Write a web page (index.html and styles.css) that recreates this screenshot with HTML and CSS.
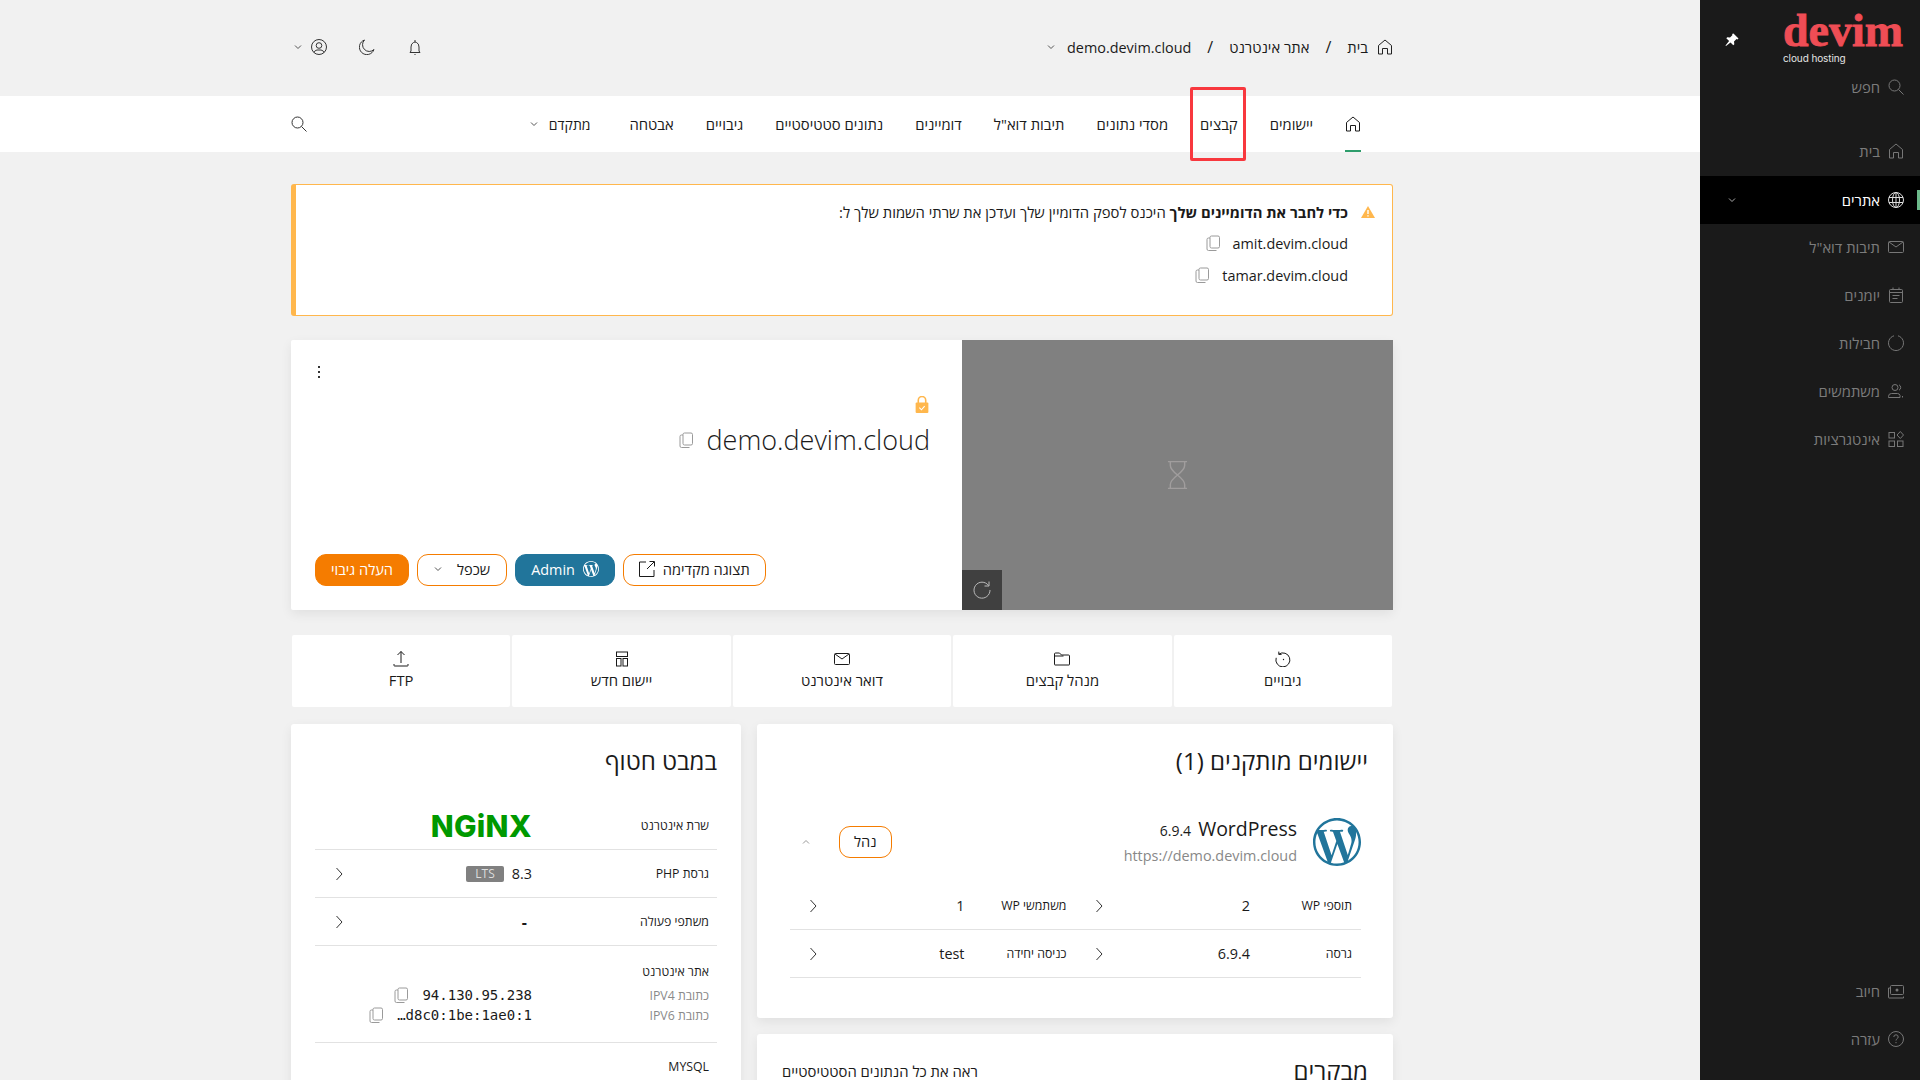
FILE: index.html
```html
<!DOCTYPE html>
<html lang="he" dir="rtl">
<head>
    <meta charset="utf-8">
    <title>demo.devim.cloud</title>
    <link rel="stylesheet" href="styles.css">
</head>
<body>
    <svg class="sprite" xmlns="http://www.w3.org/2000/svg">
        <symbol id="i-home" viewBox="0 0 16 16"><path d="M1.5 15V6.5L8 1l6.500 5.500V15h-4V9.500h-5V15z"/></symbol>
        <symbol id="i-copy" viewBox="0 0 16 16"><rect x="5" y="1" width="9.500" height="12" rx="1.500"/><path d="M5 3H3.500Q2 3 2 4.500V14q0 1.500 1.500 1.500h8"/></symbol>
        <symbol id="i-down" viewBox="0 0 8 8"><path d="M1 2.500l3 3 3-3"/></symbol>
        <symbol id="i-left" viewBox="0 0 8 14"><path d="M1.500 1l5.500 6-5.500 6"/></symbol>
        <symbol id="i-search" viewBox="0 0 16 16"><circle cx="6.500" cy="6.500" r="5.500"/><path d="M10.500 10.500l5 5"/></symbol>
        <symbol id="i-mail" viewBox="0 0 16 14"><rect x="0.500" y="1.500" width="15" height="11" rx="1"/><path d="M1 2l7 5 7-5"/></symbol>
        <symbol id="i-wp" viewBox="0 0 24 24"><path d="M21.469 6.825c.84 1.537 1.318 3.3 1.318 5.175 0 3.979-2.156 7.456-5.363 9.325l3.295-9.527c.615-1.54.82-2.771.82-3.864 0-.405-.026-.78-.07-1.11m-7.981.105c.647-.03 1.232-.105 1.232-.105.582-.075.514-.93-.067-.899 0 0-1.755.135-2.88.135-1.064 0-2.85-.15-2.85-.15-.585-.03-.661.855-.075.885 0 0 .54.061 1.125.09l1.68 4.605-2.37 7.08L5.354 6.9c.649-.03 1.234-.1 1.234-.1.585-.075.516-.93-.065-.896 0 0-1.746.138-2.874.138-.2 0-.438-.008-.69-.015C4.911 3.15 8.235 1.215 12 1.215c2.809 0 5.365 1.072 7.286 2.833-.046-.003-.091-.009-.141-.009-1.06 0-1.812.923-1.812 1.914 0 .89.513 1.643 1.06 2.531.411.72.89 1.643.89 2.977 0 .915-.354 1.994-.821 3.479l-1.075 3.585-3.9-11.61.001.014zM12 22.784c-1.059 0-2.081-.153-3.048-.437l3.237-9.406 3.315 9.087c.024.053.05.101.078.149-1.12.393-2.325.609-3.582.609M1.211 12c0-1.564.336-3.05.935-4.39L7.29 21.709C3.694 19.96 1.212 16.271 1.211 12M12 0C5.385 0 0 5.385 0 12s5.385 12 12 12 12-5.385 12-12S18.615 0 12 0"/></symbol>
    </svg>

    <div class="app">
        <!-- sidebar -->
        <aside class="sidebar">
            <div class="side-head">
                <div class="logo">
                    <span class="logo-name">devim</span>
                    <span class="logo-sub">cloud hosting</span>
                </div>
                <svg class="pin" viewBox="0 0 14 14"><path d="M8.500 0.500l5 5-1 1-1-.5-2.500 2.500.3 2.700-1 1-2.800-2.800L1 13l-.500-.5 3.600-4.500-2.800-2.800 1-1 2.700.3L7.500 2l-.5-1z"/></svg>
            </div>
            <a class="side-item side-search"><svg class="ico"><use href="#i-search"/></svg>חפש</a>
            <a class="side-item side-first"><svg class="ico"><use href="#i-home"/></svg>בית</a>
            <a class="side-item active">
                <svg class="ico" viewBox="0 0 16 16"><circle cx="8" cy="8" r="7.500"/><ellipse cx="8" cy="8" rx="3.500" ry="7.500"/><path d="M8 .5v15M1 5.500h14M1 10.500h14"/></svg>
                אתרים
                <svg class="side-caret"><use href="#i-down"/></svg>
            </a>
            <a class="side-item"><svg class="ico"><use href="#i-mail"/></svg>תיבות דוא"ל</a>
            <a class="side-item">
                <svg class="ico" viewBox="0 0 16 16"><rect x="1.500" y="2.500" width="13" height="13" rx="1"/><path d="M1.500 5.500h13M5 .5v2M11 .5v2M4.500 8.500h7M4.500 11.500h5"/></svg>
                יומנים
            </a>
            <a class="side-item">
                <svg class="ico" viewBox="0 0 16 16"><path d="M10 .8A7.500 7.500 0 1 1 6 .8"/></svg>
                חבילות
            </a>
            <a class="side-item">
                <svg class="ico" viewBox="0 0 16 16"><circle cx="7" cy="4.500" r="3"/><path d="M11 1.800a3 3 0 0 1 0 5.400M.5 14.500v-1q0-3 3-3h6q2 0 2.500 2v2zM14.500 13v1.500" /></svg>
                משתמשים
            </a>
            <a class="side-item">
                <svg class="ico" viewBox="0 0 16 16"><rect x="1" y="1.500" width="5.500" height="5.500"/><rect x="1" y="10" width="5.500" height="5.500"/><rect x="9.500" y="10" width="5.500" height="5.500"/><path d="M12.300.5l3.200 3.500-3.200 3.500L9 4z"/></svg>
                אינטגרציות
            </a>
            <a class="side-item side-bottom">
                <svg class="ico" viewBox="0 0 16 16"><rect x="2.500" y="2.500" width="13" height="9" rx="1"/><circle cx="9" cy="7" r="1.500" class="solid"/><path d="M2.500 5H.5v9.500q0 .5.5.5h14.500v-1.500"/></svg>
                חיוב
            </a>
            <a class="side-item">
                <svg class="ico" viewBox="0 0 16 16"><circle cx="8" cy="8" r="7.500"/><path d="M5.800 6q0-2.200 2.200-2.200T10.200 6c0 1.600-2.200 1.700-2.200 3.500M8 11v1.200"/></svg>
                עזרה
            </a>
        </aside>

        <div class="main">
            <!-- top bar -->
            <header class="topbar">
                <nav class="crumbs">
                    <svg class="ico crumb-home"><use href="#i-home"/></svg>
                    <span>בית</span>
                    <span class="crumb-sep">/</span>
                    <span>אתר אינטרנט</span>
                    <span class="crumb-sep">/</span>
                    <span class="crumb-site">demo.devim.cloud</span>
                    <svg class="caret crumb-caret"><use href="#i-down"/></svg>
                </nav>
                <div class="top-tools">
                    <svg class="ico" viewBox="0 0 16 16"><path d="M6.500 3.500Q8 2.500 9.500 3.500 12 4.500 12 8v4l1 1.500H3L4 12V8q0-3.500 2.500-4.500zM8 3V1M7.500 15.500h1"/></svg>
                    <svg class="ico" viewBox="0 0 16 16"><path d="M5.500 1A7.500 7.500 0 1 0 15 10.500 6.500 6.500 0 0 1 5.500 1z"/></svg>
                    <div class="user-tool">
                        <svg class="ico" viewBox="0 0 16 16"><circle cx="8" cy="8" r="7.500"/><circle cx="8" cy="6.500" r="2.800"/><path d="M3 13.500q1-2.500 3-2.500h4q2 0 3 2.500"/></svg>
                        <svg class="caret"><use href="#i-down"/></svg>
                    </div>
                </div>
            </header>

            <nav class="tabs">
                <a class="tab tab-home"><svg class="ico"><use href="#i-home"/></svg></a>
                <a class="tab">יישומים</a>
                <a class="tab">קבצים</a>
                <a class="tab">מסדי נתונים</a>
                <a class="tab">תיבות דוא"ל</a>
                <a class="tab">דומיינים</a>
                <a class="tab">נתונים סטטיסטיים</a>
                <a class="tab">גיבויים</a>
                <a class="tab">אבטחה</a>
                <a class="tab tab-more">מתקדם <svg class="caret"><use href="#i-down"/></svg></a>
                <svg class="ico tab-search"><use href="#i-search"/></svg>
                <div class="highlight"></div>
            </nav>

            <div class="content">
                <div class="alert">
                    <div class="alert-line">
                        <svg class="warn" viewBox="0 0 14 12"><path d="M7 0l7 12H0z"/><path class="warn-mark" d="M7 4v4M7 9.300v1.200"/></svg>
                        <span><b>כדי לחבר את הדומיינים שלך</b> היכנס לספק הדומיין שלך ועדכן את שרתי השמות שלך ל:</span>
                    </div>
                    <div class="alert-domain">amit.devim.cloud <svg class="copy"><use href="#i-copy"/></svg></div>
                    <div class="alert-domain">tamar.devim.cloud <svg class="copy"><use href="#i-copy"/></svg></div>
                </div>

                <section class="site-card">
                    <div class="preview">
                        <svg class="hourglass" viewBox="0 0 22 30"><path d="M1 1h20M1 29h20M3.500 1v4q0 4 7.500 10 7.500 6 7.500 10v4M18.500 1v4q0 4-7.500 10-7.500 6-7.500 10v4"/></svg>
                        <div class="refresh">
                            <svg viewBox="0 0 18 18"><path d="M15.500 4.500A8 8 0 1 0 17 9M16 .5v4.500h-4.500"/></svg>
                        </div>
                    </div>
                    <div class="site-info">
                        <div class="site-menu"><i></i><i></i><i></i></div>
                        <svg class="lock" viewBox="0 0 12 16"><path class="lock-arc" d="M2.500 7V4a3.500 3.500 0 0 1 7 0v3"/><rect y="6" width="12" height="10" rx="1"/><path class="lock-tick" d="M3.500 11l2 2 3-3.500"/></svg>
                        <div class="site-title">
                            <h1>demo.devim.cloud</h1>
                            <svg class="copy"><use href="#i-copy"/></svg>
                        </div>
                        <div class="site-actions">
                            <button class="btn btn-line btn-preview"><span>תצוגה מקדימה</span>
                                <svg class="ext" viewBox="0 0 16 16"><path d="M7 1H.5v14.500H15V9M8 8l7-7M10.500 .5h5v5"/></svg>
                            </button>
                            <button class="btn btn-wp"><svg class="wp-small"><use href="#i-wp"/></svg>Admin</button>
                            <button class="btn btn-line btn-clone">שכפל <svg class="caret"><use href="#i-down"/></svg></button>
                            <button class="btn btn-solid">העלה גיבוי</button>
                        </div>
                    </div>
                </section>

                <div class="tiles">
                    <a class="tile">
                        <svg class="ico" viewBox="0 0 16 16"><path d="M3.800 3.200A7 7 0 1 1 1.200 6.800M3.800 .6v2.800h2.800"/><circle class="solid" cx="8.500" cy="8.500" r=".7"/></svg>
                        גיבויים
                    </a>
                    <a class="tile">
                        <svg class="ico" viewBox="0 0 16 14"><path d="M.5 12.500V2Q.5 1 1.500 1h4l2 2h7q1 0 1 1v8.500q0 .5-.5.5H1q-.5 0-.5-.5zM.5 4h9"/></svg>
                        מנהל קבצים
                    </a>
                    <a class="tile"><svg class="ico"><use href="#i-mail"/></svg>דואר אינטרנט</a>
                    <a class="tile">
                        <svg class="ico" viewBox="0 0 14 16"><rect x="1.500" y="1" width="11" height="4.500"/><rect x="1.500" y="7.500" width="4.500" height="7.500"/><rect x="8" y="7.500" width="4.500" height="7.500"/></svg>
                        יישום חדש
                    </a>
                    <a class="tile">
                        <svg class="ico" viewBox="0 0 16 16"><path d="M8 .5V12M4.500 4L8 .5 11.500 4M1 13v1.500q0 .5.500.5h13q.5 0 .5-.5V13"/></svg>
                        FTP
                    </a>
                </div>

                <div class="panels">
                    <div class="panel-col">
                        <section class="panel panel-apps">
                            <h2>יישומים מותקנים (1)</h2>
                            <div class="app-head">
                                <svg class="wp-logo"><use href="#i-wp"/></svg>
                                <div class="app-meta">
                                    <div class="app-name"><span>WordPress</span><small>6.9.4</small></div>
                                    <div class="app-url">https://demo.devim.cloud</div>
                                </div>
                                <button class="btn btn-line btn-manage">נהל</button>
                                <svg class="caret caret-up"><use href="#i-down"/></svg>
                            </div>
                            <div class="app-grid">
                                <div class="app-cell"><span class="lbl">תוספי WP</span><span class="val">2</span><svg class="chev"><use href="#i-left"/></svg></div>
                                <div class="app-cell"><span class="lbl">משתמשי WP</span><span class="val">1</span><svg class="chev"><use href="#i-left"/></svg></div>
                                <div class="app-cell"><span class="lbl">גרסה</span><span class="val">6.9.4</span><svg class="chev"><use href="#i-left"/></svg></div>
                                <div class="app-cell"><span class="lbl">כניסה יחידה</span><span class="val">test</span><svg class="chev"><use href="#i-left"/></svg></div>
                            </div>
                        </section>
                        <section class="panel panel-visits">
                            <div class="visits-head">
                                <h2>מבקרים</h2>
                                <a class="visits-link">ראה את כל הנתונים הסטטיסטיים</a>
                            </div>
                        </section>
                    </div>

                    <section class="panel panel-glance">
                        <h2>במבט חטוף</h2>
                        <div class="gl-row"><span class="lbl">שרת אינטרנט</span><span class="nginx">NGiNX</span></div>
                        <div class="gl-row"><span class="lbl">גרסת PHP</span><span class="val">8.3</span><span class="badge">LTS</span><svg class="chev"><use href="#i-left"/></svg></div>
                        <div class="gl-row"><span class="lbl">משתפי פעולה</span><span class="val val-dash">-</span><svg class="chev"><use href="#i-left"/></svg></div>
                        <div class="gl-block">
                            <div class="lbl">אתר אינטרנט</div>
                            <div class="gl-ip"><span class="lbl lbl-muted">כתובת IPV4</span><span class="ip" dir="ltr">94.130.95.238</span><svg class="copy"><use href="#i-copy"/></svg></div>
                            <div class="gl-ip"><span class="lbl lbl-muted">כתובת IPV6</span><span class="ip" dir="ltr">…d8c0:1be:1ae0:1</span><svg class="copy"><use href="#i-copy"/></svg></div>
                        </div>
                        <div class="gl-block gl-mysql">
                            <div class="lbl">MYSQL</div>
                        </div>
                    </section>
                </div>
            </div>
        </div>
    </div>
</body>
</html>
```

FILE: styles.css
```css
* {
    box-sizing: border-box;
}
html, body {
    margin: 0;
    height: 1080px;
    overflow: hidden;
}
body {
    font-family: "Open Sans", "Noto Sans", "DejaVu Sans", sans-serif;
    font-size: 14.8px;
    color: #1a1a1a;
    background: #f1f1f1;
}
h1, h2 {
    margin: 0;
    font-weight: 400;
}
.sprite {
    display: none;
}
svg {
    fill: none;
    stroke: currentColor;
    stroke-width: 1;
    flex: none;
}
.ico {
    width: 16px;
    height: 16px;
}
.caret {
    width: 8px;
    height: 8px;
    color: #555;
}
.copy {
    width: 16px;
    height: 16px;
    color: #9a9a9a;
}
.chev {
    width: 8px;
    height: 14px;
    color: #333;
}

.app {
    display: flex;
    height: 1080px;
}

/* sidebar */
.sidebar {
    width: 220px;
    flex: none;
    display: flex;
    flex-direction: column;
    padding-bottom: 17px;
    background: #1a1a1a;
    color: #7c7c7c;
}
.side-head {
    height: 63px;
    display: flex;
    justify-content: space-between;
    padding: 0 16px 0 25px;
}
.logo {
    display: flex;
    flex-direction: column;
    width: 121px;
    padding-top: 9px;
    direction: ltr;
}
.logo-name {
    font-family: "Liberation Serif", serif;
    font-weight: 700;
    font-size: 46px;
    line-height: 44px;
    color: #ef4d55;
    -webkit-text-stroke: 0.8px #ef4d55;
}
.logo-sub {
    margin-top: -1px;
    font-family: "Inter", sans-serif;
    font-size: 10px;
    line-height: 12px;
    letter-spacing: -0.1px;
    color: #e4e4e4;
}
.pin {
    width: 14px;
    height: 14px;
    margin-top: 33px;
    fill: #fff;
    stroke: none;
}
.side-item {
    height: 48px;
    display: flex;
    align-items: center;
    gap: 8px;
    padding: 0 16px;
}
.side-first {
    margin-top: 16px;
}
.side-bottom {
    margin-top: auto;
}
.side-item .ico {
    color: #777;
}
.side-item.active {
    position: relative;
    margin: 1px 0 -1px;
    background: #000;
    color: #fff;
}
.side-item.active .ico {
    color: #ddd;
}
.side-item.active::before {
    content: "";
    position: absolute;
    top: 14px;
    right: 0;
    width: 3px;
    height: 20px;
    background: #6cb98a;
}
.side-caret {
    width: 8px;
    height: 8px;
    margin-inline-start: auto;
    margin-inline-end: 12px;
    color: #aaa;
}
.solid {
    fill: currentColor;
    stroke: none;
}

/* top bar and tabs */
.main {
    flex: 1;
    min-width: 0;
}
.topbar {
    height: 96px;
    display: flex;
    justify-content: space-between;
    align-items: center;
    padding: 0 307px 2px 294px;
}
.crumbs {
    display: flex;
    align-items: center;
    gap: 16px;
}
.crumb-home {
    margin-inline-end: -7px;
    color: #222;
}
.crumb-site {
    font-size: 14.4px;
}
.crumb-sep {
    font-size: 16px;
}
.crumb-caret {
    margin-inline-start: -4px;
}
.top-tools {
    display: flex;
    align-items: center;
    gap: 32px;
    color: #333;
}
.user-tool {
    display: flex;
    align-items: center;
    gap: 9px;
}
.tabs {
    position: relative;
    height: 56px;
    display: flex;
    align-items: center;
    gap: 32px;
    padding: 0 339px 0 291px;
    background: #fff;
}
.tab {
    display: flex;
    align-items: center;
    gap: 11px;
    white-space: nowrap;
}
.tab-more {
    margin-inline-start: 7px;
    font-size: 14px;
}
.tab-home {
    height: 56px;
    border-bottom: 2px solid #2e9d6c;
    padding-top: 2px;
}
.tab-search {
    margin-inline-start: auto;
    color: #333;
}
.highlight {
    position: absolute;
    top: -9px;
    right: 454px;
    width: 56px;
    height: 74px;
    border: 3px solid #f8383e;
    border-radius: 2px;
}

/* page content */
.content {
    width: 1102px;
    margin-inline-start: 307px;
}
.alert {
    height: 132px;
    margin-top: 32px;
    padding: 11px 17px 0 0;
    background: #fff;
    border: 1px solid #ffb74d;
    border-left-width: 5px;
    border-radius: 3px;
}
.alert-line {
    display: flex;
    align-items: center;
    gap: 13px;
    height: 31px;
}
.warn {
    width: 14px;
    height: 12px;
    fill: #ffb74d;
    stroke: none;
}
.warn-mark {
    stroke: #fff;
    stroke-width: 1.4;
}
.alert-line b {
    font-weight: 700;
}
.alert-domain {
    display: flex;
    align-items: center;
    gap: 12px;
    height: 32px;
    padding-inline-start: 27px;
    font-size: 14.4px;
}

.site-card {
    display: flex;
    height: 270px;
    margin-top: 24px;
    background: #fff;
    border-radius: 2px;
    box-shadow: 0 4px 12px rgba(0, 0, 0, 0.07);
}
.preview {
    position: relative;
    width: 431px;
    flex: none;
    display: flex;
    align-items: center;
    justify-content: center;
    background: #808080;
}
.hourglass {
    width: 21px;
    height: 30px;
    color: #a09d9d;
    stroke-width: 1.5;
}
.refresh {
    position: absolute;
    left: 0;
    bottom: 0;
    width: 40px;
    height: 40px;
    display: flex;
    align-items: center;
    justify-content: center;
    background: #404040;
    color: #bbb;
}
.refresh svg {
    width: 18px;
    height: 18px;
}
.site-info {
    flex: 1;
    display: flex;
    flex-direction: column;
    padding: 0 32px 24px 24px;
}
.site-menu {
    align-self: flex-end;
    display: flex;
    flex-direction: column;
    gap: 3px;
    margin: 26px 0 0 3px;
}
.site-menu i {
    display: block;
    width: 2px;
    height: 2px;
    background: #333;
}
.lock {
    width: 14px;
    height: 17px;
    margin-top: 18px;
    margin-inline-start: 1px;
    fill: #ffb74d;
    stroke: none;
}
.lock-arc {
    fill: none;
    stroke: #ffb74d;
    stroke-width: 1.5;
}
.lock-tick {
    fill: none;
    stroke: #fff;
}
.site-title {
    display: flex;
    align-items: center;
    gap: 13px;
    margin-top: 8px;
}
.site-title h1 {
    font-size: 27px;
    font-weight: 300;
    line-height: 38px;
}
.site-actions {
    margin-top: auto;
    display: flex;
    justify-content: flex-end;
    gap: 8px;
}
.btn {
    height: 32px;
    display: inline-flex;
    align-items: center;
    gap: 8px;
    padding: 0 16px 2px;
    border: 1px solid #f57c00;
    border-radius: 11px;
    background: #fff;
    font: inherit;
    font-size: 14.6px;
    color: #1a1a1a;
}
.ext {
    width: 16px;
    height: 16px;
}
.btn-preview {
    padding: 0 15px 2px;
}
.btn-wp {
    padding: 0 15px 2px;
    background: #21759b;
    border-color: #21759b;
    color: #fff;
    font-size: 14.4px;
}
.wp-small {
    width: 16px;
    height: 16px;
    fill: #fff;
    stroke: none;
}
.btn-clone {
    gap: 15px;
}
.btn-solid {
    padding: 0 15px 2px;
    background: #f57c00;
    color: #fff;
}

.tiles {
    display: flex;
    gap: 2px;
    margin: 25px 1px 0;
}
.tile {
    flex: 1;
    height: 72px;
    display: flex;
    flex-direction: column;
    align-items: center;
    padding-top: 16px;
    gap: 3px;
    background: #fff;
    border-radius: 2px;
}

.panels {
    display: grid;
    grid-template-columns: 636px 450px;
    gap: 16px;
    margin-top: 17px;
}
.panel-col {
    display: flex;
    flex-direction: column;
    gap: 16px;
}
.panel {
    padding: 22px 25px 0;
    background: #fff;
    border-radius: 3px;
    box-shadow: 0 4px 12px rgba(0, 0, 0, 0.07);
}
.panel h2 {
    font-size: 24px;
    line-height: 30px;
}
.panel-apps {
    height: 294px;
}
.app-head {
    display: flex;
    align-items: center;
    gap: 16px;
    margin: 40px 7px 0 8px;
}
.wp-logo {
    width: 48px;
    height: 48px;
    fill: #21759b;
    stroke: none;
}
.app-meta {
    flex: 1;
}
.app-name {
    display: flex;
    align-items: baseline;
    gap: 7px;
    font-size: 19.5px;
    line-height: 26px;
}
.app-name small {
    font-size: 14px;
}
.app-url {
    color: #888;
    font-size: 14.4px;
    line-height: 23px;
}
.btn-manage {
    padding: 0 14px 2px;
}
.caret-up {
    transform: rotate(180deg);
    margin: 0 13px 0 12px;
    color: #999;
}
.app-grid {
    display: grid;
    grid-template-columns: 1fr 1fr;
    margin: 15px 7px 0 8px;
}
.app-cell {
    height: 48px;
    display: flex;
    align-items: center;
    padding: 0 9px 0 19px;
    border-bottom: 1px solid #e2e2e2;
}
.lbl {
    font-size: 12.3px;
}
.lbl-muted {
    color: #8a8a8a;
}
.app-cell .lbl {
    width: 102px;
}
.val {
    flex: 1;
    font-size: 14.4px;
}
.panel-visits {
    height: 120px;
}
.visits-head {
    display: flex;
    align-items: center;
    justify-content: space-between;
}

.panel-glance {
    height: 420px;
    padding: 22px 24px 0;
}
.panel-glance h2 {
    margin-bottom: 26px;
}
.gl-row {
    height: 48px;
    display: flex;
    align-items: center;
    padding: 0 8px 0 20px;
    border-bottom: 1px solid #e2e2e2;
}
.gl-row .lbl, .gl-ip .lbl {
    width: 177px;
    flex: none;
}
.gl-row .val {
    flex: none;
}
.gl-row .chev {
    margin-inline-start: auto;
}
.val-dash {
    padding-inline-start: 5px;
    font-weight: 700;
    font-size: 16px;
}
.nginx {
    font-family: "Inter", sans-serif;
    font-weight: 800;
    font-size: 30px;
    line-height: 24px;
    letter-spacing: 0.3px;
    color: #009900;
    direction: ltr;
}
.badge {
    margin-inline-start: 8px;
    padding: 0 9px;
    height: 16px;
    line-height: 16px;
    font-size: 12px;
    border-radius: 2px;
    background: #808080;
    color: #ddd;
}
.gl-block {
    height: 97px;
    padding: 16px 8px 0 0;
    border-bottom: 1px solid #e2e2e2;
}
.gl-mysql {
    padding-top: 14px;
}
.gl-ip {
    display: flex;
    align-items: center;
    height: 20px;
}
.gl-block > .lbl {
    line-height: 20px;
    margin-bottom: 3px;
}
.ip {
    font-family: "DejaVu Sans Mono", monospace;
    font-size: 14px;
}
.gl-ip .copy {
    margin-inline-start: 13px;
}
```
